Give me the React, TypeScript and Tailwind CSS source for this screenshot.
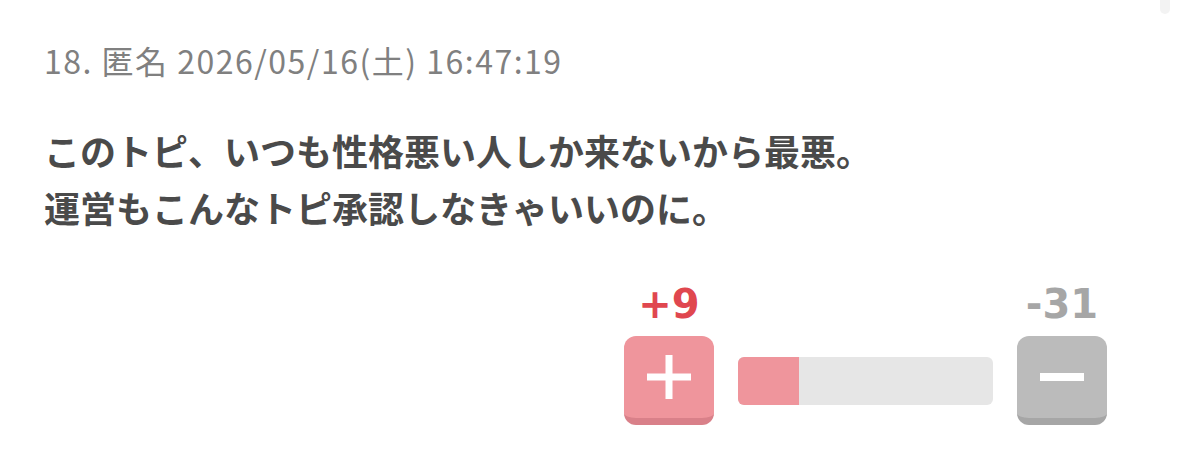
export default function App() {
  const plus = 9;
  const minus = 31;
  const fill = 24;

  return (
    <div
      className="relative w-[1179px] h-[468px] bg-white overflow-hidden"
      style={{ fontFamily: '"Noto Sans CJK JP", "Noto Sans", sans-serif' }}
    >
      <div className="absolute right-[9px] top-0 w-[10px] h-[14px] rounded-b-full bg-[#f3f3f3]" />

      <div className="pl-[44px] pr-[72px] pt-[38px]">
        <div className="text-[32px] leading-[44px] tracking-[1.5px] text-[#808080]">
          18. 匿名 2026/05/16(土) 16:47:19
        </div>

        <div className="mt-[40px] text-[36px] leading-[57px] font-bold text-[#4a4a4a]">
          <div>このトピ、いつも性格悪い人しか来ないから最悪。</div>
          <div>運営もこんなトピ承認しなきゃいいのに。</div>
        </div>

        <div className="mt-[44px] flex justify-end items-end">
          <div className="flex flex-col items-center w-[90px]">
            <div
              className="text-[40px] leading-[48px] font-bold text-[#e0474f]"
              style={{ fontFamily: '"DejaVu Sans", sans-serif' }}
            >
              +{plus}
            </div>
            <button className="mt-[8px] w-[90px] h-[89px] rounded-[12px] bg-[#ef959c] border-b-[7px] border-[#d98089] flex items-center justify-center">
              <svg width="44" height="44" viewBox="0 0 44 44">
                <rect x="0" y="18.5" width="44" height="7" fill="#fff" />
                <rect x="18.5" y="0" width="7" height="44" fill="#fff" />
              </svg>
            </button>
          </div>

          <div className="mx-[24px] mb-[20px] w-[255px] h-[48px] rounded-[6px] bg-[#e6e6e6] overflow-hidden">
            <div className="h-full bg-[#ef959c]" style={{ width: `${fill}%` }} />
          </div>

          <div className="flex flex-col items-center w-[90px]">
            <div
              className="text-[40px] leading-[48px] font-bold text-[#a6a6a6]"
              style={{ fontFamily: '"DejaVu Sans", sans-serif' }}
            >
              -{minus}
            </div>
            <button className="mt-[8px] w-[90px] h-[89px] rounded-[12px] bg-[#bbbbbb] border-b-[7px] border-[#a6a6a6] flex items-center justify-center">
              <svg width="44" height="44" viewBox="0 0 44 44">
                <rect x="0" y="18" width="44" height="8" fill="#fff" />
              </svg>
            </button>
          </div>
        </div>
      </div>
    </div>
  );
}
